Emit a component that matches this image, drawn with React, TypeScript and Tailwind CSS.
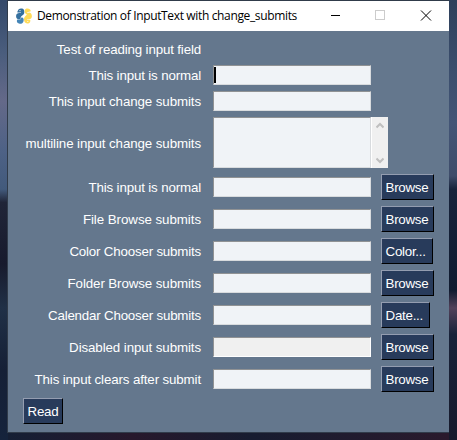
import React from 'react';

type Row = { label: string; spacing: string; button?: string; width?: string; kind?: 'focused' | 'disabled' | 'multiline' | 'none' };

const rows: Row[] = [
  { label: 'Test of reading input field', spacing: 'tracking-[-0.15px]', kind: 'none' },
  { label: 'This input is normal', spacing: 'tracking-[-0.15px]', kind: 'focused' },
  { label: 'This input change submits', spacing: 'tracking-[-0.1px]' },
  { label: 'multiline input change submits', spacing: 'tracking-[-0.1px]', kind: 'multiline' },
  { label: 'This input is normal', spacing: 'tracking-[-0.15px]', button: 'Browse', width: 'w-[53px]' },
  { label: 'File Browse submits', spacing: 'tracking-[-0.06px]', button: 'Browse', width: 'w-[53px]' },
  { label: 'Color Chooser submits', spacing: 'tracking-[-0.19px]', button: 'Color...', width: 'w-[52px]' },
  { label: 'Folder Browse submits', spacing: 'tracking-[-0.1px]', button: 'Browse', width: 'w-[53px]' },
  { label: 'Calendar Chooser submits', spacing: 'tracking-[-0.2px]', button: 'Date...', width: 'w-[49px]' },
  { label: 'Disabled input submits', spacing: 'tracking-[-0.1px]', button: 'Browse', width: 'w-[53px]', kind: 'disabled' },
  { label: 'This input clears after submit', spacing: 'tracking-[-0.13px]', button: 'Browse', width: 'w-[53px]' },
];

function Button({ text, width }: { text: string; width: string }) {
  return (
    <button className={`flex h-[26px] shrink-0 items-center whitespace-nowrap border border-t-[#949db0] border-r-black border-b-black border-l-[#949db0] bg-[#283b5b] pt-0.5 pl-[3.5px] text-[13.33px] leading-none tracking-[-0.25px] text-white ${width}`}>
      {text}
    </button>
  );
}

function Field({ kind }: { kind?: Row['kind'] }) {
  if (kind === 'none') return null;
  const tone = kind === 'disabled' ? 'bg-[#f0f0f0] border-r-white border-b-white' : 'bg-[#f0f3f7] border-r-[#d8dbde] border-b-[#d8dbde]';
  const size = kind === 'multiline' ? 'h-[51px]' : 'h-5';
  return (
    <div className={`flex w-[158px] shrink-0 items-center border border-t-[#909294] border-l-[#909294] ${size} ${tone}`}>
      {kind === 'focused' && <span className="h-4 w-0.5 bg-black" />}
    </div>
  );
}

function ScrollBar() {
  return (
    <div className="flex h-[51px] w-[17px] flex-col items-center justify-between border-l border-white bg-[#f0f0f0] pt-[5px] pb-[4px]">
      <svg width="8" height="7" viewBox="0 0 8 7" fill="none" stroke="#bfbfbf" strokeWidth="2"><path d="M.5 5.5 4 2l3.5 3.5" /></svg>
      <svg width="8" height="7" viewBox="0 0 8 7" fill="none" stroke="#bfbfbf" strokeWidth="2"><path d="M.5 1.5 4 5l3.5-3.5" /></svg>
    </div>
  );
}

const upper = 'M2 2.500C2.300.600 4.500 0 6.200.600 8 1.200 8.400 2.800 8.300 4.500 8.100 7.400 5.200 7.200 4.700 9.500L4.500 11.300H2.300C.500 10.800 0 9.300.100 7.700.300 5.900 1.500 5.100 3.200 5H5V4.400H1.500C1.100 3.900 1.600 3.100 2 2.500Z';
const lower = 'M1.200 11.500h3l1.500-2.300c1.700.3 2.300 2 1.900 3.700-.4 2.100-2.100 2.900-3.900 2.800-1.800-.1-3.600-1.700-2.500-4.200Z';

function Logo() {
  return (
    <svg width="16" height="16" viewBox="0 0 16 16">
      <g fill="#35709f"><path d={upper} /><path d={lower} fill="#4585b7" /></g>
      <g fill="#ffdb58" transform="translate(16 0) scale(-1 1)"><path d="M1.200 3.300C1.400 1 3.600.1 5.500.6 7.500 1.200 7.900 3.500 6.900 5.100L5.600 6.500C4.300 5.800 4.500 5 4.900 4.300Z" /><path d="M2.500 4.600 5.100 4.900c-.7 1.100 0 1.700 1 2.500 1.700 1.400 2.300 3.300 1.700 5.400-.5 2.200-2.300 3-4.100 2.600-1.600-.3-2.200-1.500-2-3.300h3.200v-.7H3C1 11.300 0 9.900.1 8 .2 6.200 1 5.100 2.500 4.600Z" /></g>
      <circle cx="4" cy="2.600" r=".6" fill="white" />
      <circle cx="11.800" cy="13.500" r=".6" fill="white" />
    </svg>
  );
}

export default function App() {
  return (
    <div className="flex h-[440px] w-[457px] overflow-hidden bg-[#1d1b2c]">
      <div className="w-2 shrink-0 bg-[linear-gradient(180deg,#34496a_0%,#4a5d7d_12%,#646989_23%,#4e6286_34%,#425a7c_43%,#202538_46%,#171a2d_60%,#203047_70%,#152036_84%,#15233c_100%)]" />
      <div className="flex h-[440px] w-[441px] shrink-0 flex-col bg-[linear-gradient(90deg,#151f34_0%,#27182c_28%,#171c30_55%,#2a1a2d_100%)] pt-px">
        <div className="h-[431px] w-[441px] bg-[#64778d] font-['Liberation_Sans',Arial,sans-serif] text-white shadow-[0_0_0_1px_#303b4a]">
          <header className="flex h-[30px] items-center bg-white pl-2 text-black">
            <Logo />
            <h1 className="ml-[5px] w-[262px] whitespace-nowrap font-['Open_Sans',sans-serif] text-[12px] leading-4 tracking-[-0.35px]">Demonstration of InputText with change_submits</h1>
            <svg className="ml-[32px]" width="118" height="30" viewBox="0 0 118 30" fill="none" shapeRendering="crispEdges">
              <path d="M0 14.500h9" stroke="black" />
              <rect x="44.500" y="9.500" width="9" height="9" stroke="#ccc" />
              <path d="m90 9.500 10 10m0-10-10 10" stroke="black" shapeRendering="auto" />
            </svg>
          </header>
          <main className="pt-[5px]">
            {rows.map((row, i) => (
              <div key={i} className={`flex items-center ${row.button ? 'h-8' : row.kind === 'multiline' ? 'h-[57px]' : 'h-[26px]'}`}>
                <div className={`mr-3 w-[193px] shrink-0 whitespace-nowrap pt-0.5 text-right text-[13.33px] leading-4 ${row.spacing}`}>{row.label}</div>
                <Field kind={row.kind} />
                {row.kind === 'multiline' && <ScrollBar />}
                {row.button && <div className="ml-2.5"><Button text={row.button} width={row.width!} /></div>}
              </div>
            ))}
            <div className="flex h-8 items-center pl-[15px]"><Button text="Read" width="w-10" /></div>
          </main>
        </div>
      </div>
      <div className="w-2 shrink-0 bg-[linear-gradient(180deg,#2f405b_0%,#3a4d6c_15%,#435576_28%,#3e4c6a_40%,#17233b_43%,#101b30_66%,#52415a_70%,#182239_76%,#171a2c_100%)]" />
    </div>
  );
}
